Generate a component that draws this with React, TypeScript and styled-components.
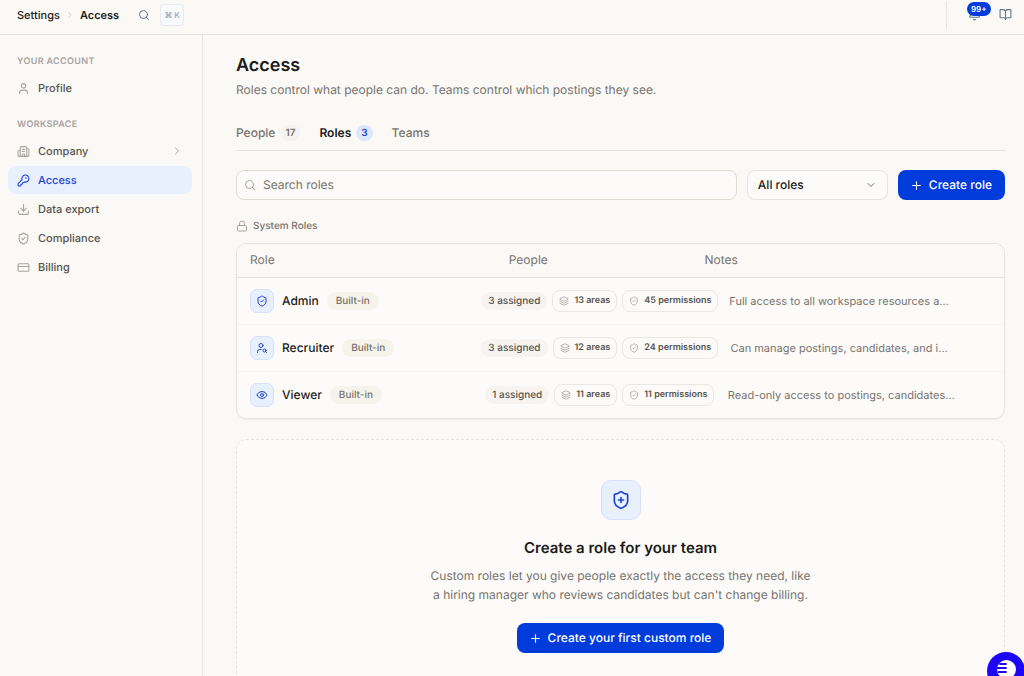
import React from "react";
import styled, { createGlobalStyle } from "styled-components";
import {
  Bell, BookOpen, Building2, ChevronDown, ChevronRight, CreditCard, Download, Eye, KeyRound,
  Layers, Lock, Plus, Search, ShieldCheck, ShieldPlus, User, UserSearch,
} from "lucide-react";

const color = {
  page: "#faf9f6",
  surface: "#fcfbf9",
  line: "#e6e4e0",
  faint: "#f6f4f1",
  ink: "#1c1b1a",
  body: "#57534e",
  muted: "#78736e",
  soft: "#a8a29e",
  blue: "#003bdb",
  accent: "#1d43cf",
  tint: "#e8effd",
};

const GlobalStyle = createGlobalStyle`
  * { box-sizing: border-box; }
  body {
    margin: 0;
    background: ${color.page};
    color: ${color.ink};
    font-family: Inter, "Liberation Sans", sans-serif;
    font-size: 12px;
    line-height: 16px;
    text-rendering: geometricPrecision;
    overflow: hidden;
  }
  button, input, select { font: inherit; color: inherit; text-rendering: inherit; }
  a { color: inherit; text-decoration: none; }
  h1, h2, p { margin: 0; }
`;

const Shell = styled.div`
  display: flex;
  flex-direction: column;
  height: 100vh;
`;

const TopBar = styled.header`
  display: flex;
  align-items: center;
  justify-content: space-between;
  flex: none;
  height: 35px;
  padding: 0 12px 5px 17px;
  border-bottom: 1px solid ${color.line};
`;

const Crumbs = styled.nav`
  display: flex;
  align-items: center;
  gap: 5px;
  font-size: 11px;
  font-weight: 500;
  svg { color: #c9c5c1; }
`;

const Current = styled.span`
  font-weight: 600;
`;

const IconButton = styled.button`
  display: flex;
  align-items: center;
  padding: 0;
  border: 0;
  background: none;
  color: #64748b;
`;

const SearchTrigger = styled(IconButton)`
  gap: 10px;
  margin-left: 14px;
  && svg { color: #64748b; }
`;

const Shortcut = styled.kbd`
  display: flex;
  align-items: center;
  justify-content: center;
  gap: 2px;
  width: 24px;
  height: 22px;
  border: 1px solid #e6ebf2;
  border-radius: 4px;
  background: #f8fafc;
  color: #94a3b8;
  font: 500 8px/10px Inter, "DejaVu Sans", sans-serif;
`;

const Actions = styled.div`
  display: flex;
  align-items: center;
  gap: 18px;
  height: 28px;
  padding-left: 21px;
  border-left: 1px solid ${color.line};
`;

const BellButton = styled(IconButton)`
  position: relative;
`;

const Count = styled.span`
  position: absolute;
  left: -1px;
  top: -6px;
  padding: 0 4px;
  border-radius: 7px;
  background: ${color.blue};
  color: #fff;
  font-size: 8px;
  font-weight: 600;
  line-height: 14px;
`;

const Body = styled.div`
  display: flex;
  flex: 1;
  min-height: 0;
`;

const Sidebar = styled.nav`
  flex: none;
  width: 203px;
  padding: 20px 10px 0 8px;
  border-right: 1px solid ${color.line};
`;

const Group = styled.section`
  margin-bottom: 16px;
`;

const GroupTitle = styled.h2`
  padding: 0 9px;
  margin-bottom: 5px;
  color: ${color.soft};
  font-size: 9px;
  font-weight: 600;
  line-height: 14px;
  letter-spacing: 0.04em;
  text-transform: uppercase;
`;

const NavList = styled.ul`
  display: flex;
  flex-direction: column;
  gap: 1px;
  margin: 0;
  padding: 0;
  list-style: none;
`;

const NavLink = styled.a<{ $active?: boolean }>`
  display: flex;
  align-items: center;
  gap: 8px;
  height: 28px;
  padding: 0 9px;
  border-radius: 8px;
  background: ${(p) => (p.$active ? color.tint : "transparent")};
  font-size: 11px;
  font-weight: 500;
  && { color: ${(p) => (p.$active ? color.accent : color.body)}; }
  svg { color: ${(p) => (p.$active ? color.accent : color.soft)}; }
  svg:last-child:not(:first-child) { margin-left: auto; }
`;

const Main = styled.main`
  flex: 1;
  min-width: 0;
  padding: 20px 19px 0 33px;
`;

const Title = styled.h1`
  font-size: 18px;
  font-weight: 600;
  line-height: 22px;
`;

const Subtitle = styled.p`
  margin-top: 5px;
  color: ${color.muted};
`;

const Tabs = styled.div`
  display: flex;
  gap: 19px;
  height: 36px;
  margin-top: 17px;
  border-bottom: 1px solid ${color.line};
`;

const Tab = styled.button<{ $active?: boolean }>`
  display: flex;
  align-items: center;
  gap: 5px;
  padding: 0;
  border: 0;
  background: none;
  color: ${(p) => (p.$active ? color.ink : color.muted)};
  font-weight: ${(p) => (p.$active ? 600 : 500)};
`;

const TabCount = styled.span<{ $active?: boolean }>`
  padding: 0 5px;
  border-radius: 8px;
  background: ${(p) => (p.$active ? "#dfe6f7" : "#f5f3f0")};
  color: ${(p) => (p.$active ? color.accent : color.muted)};
  font-size: 10px;
  font-weight: 600;
  line-height: 16px;
`;

const Toolbar = styled.div`
  display: flex;
  gap: 10px;
  margin-top: 19px;
`;

const Field = styled.label`
  display: flex;
  align-items: center;
  gap: 7px;
  height: 30px;
  border: 1px solid ${color.line};
  border-radius: 8px;
  background: ${color.surface};
`;

const SearchField = styled(Field)`
  flex: 1;
  min-width: 0;
  padding: 0 7px;
  border-color: #dddbd4;
  color: ${color.soft};
  input {
    flex: 1;
    min-width: 0;
    padding: 0;
    border: 0;
    outline: 0;
    background: none;
    color: ${color.ink};
  }
  input::placeholder { color: ${color.muted}; opacity: 1; }
`;

const SelectField = styled(Field)`
  width: 141px;
  padding: 0 10px;
  select {
    flex: 1;
    min-width: 0;
    padding: 0;
    border: 0;
    outline: 0;
    appearance: none;
    background: none;
    font-weight: 500;
  }
  svg { color: ${color.muted}; }
`;

const PrimaryButton = styled.button`
  display: inline-flex;
  align-items: center;
  gap: 6px;
  height: 30px;
  padding: 0 13px 0 12px;
  border: 0;
  border-radius: 8px;
  background: ${color.blue};
  color: #fff;
  font-weight: 500;
  white-space: nowrap;
`;

const SectionLabel = styled.h2`
  display: flex;
  align-items: center;
  gap: 5px;
  margin: 18px 0 9px;
  color: ${color.muted};
  font-size: 10px;
  font-weight: 500;
  line-height: 16px;
  svg { color: ${color.soft}; }
`;

const TableCard = styled.div`
  overflow: hidden;
  border: 1px solid ${color.line};
  border-radius: 10px;
  background: ${color.surface};
  box-shadow: 0 1px 1px rgba(0, 0, 0, 0.04);
`;

const Table = styled.table`
  width: 100%;
  table-layout: fixed;
  border-collapse: collapse;
`;

const Col = styled.col<{ $share: number }>`
  width: ${(p) => p.$share}%;
`;

const HeadCell = styled.th<{ $indent: number }>`
  height: 33px;
  padding: 0 0 0 ${(p) => p.$indent}px;
  border-bottom: 1px solid ${color.line};
  background: ${color.page};
  color: ${color.muted};
  font-weight: 400;
  text-align: left;
`;

const Row = styled.tr`
  & + & td { border-top: 1px solid ${color.faint}; }
`;

const Cell = styled.td`
  height: 47px;
  padding: 0;
`;

const RoleCell = styled.div`
  display: flex;
  align-items: center;
  gap: 8px;
  padding-left: 13px;
  font-weight: 500;
`;

const IconTile = styled.span<{ $large?: boolean }>`
  display: flex;
  align-items: center;
  justify-content: center;
  width: ${(p) => (p.$large ? 40 : 24)}px;
  height: ${(p) => (p.$large ? 40 : 24)}px;
  border: 1px solid #d5e0fa;
  border-radius: ${(p) => (p.$large ? 10 : 7)}px;
  background: ${color.tint};
  color: ${color.accent};
`;

const Pill = styled.span<{ $tone?: "sand" }>`
  padding: 0 ${(p) => (p.$tone ? 9 : 7)}px;
  border-radius: 9px;
  background: ${(p) => (p.$tone ? "#f5f3ec" : "#f6f3f1")};
  color: ${(p) => (p.$tone ? color.muted : color.body)};
  font-size: 10px;
  font-weight: 500;
  line-height: 18px;
`;

const PeopleCell = styled.div`
  display: flex;
  align-items: center;
  justify-content: center;
  gap: 5px;
  padding-right: 3px;
  white-space: nowrap;
`;

const Tag = styled.span`
  display: flex;
  align-items: center;
  gap: 5px;
  height: 22px;
  padding: 0 6px;
  border: 1px solid #ebe8e4;
  border-radius: 8px;
  color: ${color.body};
  font-size: 9px;
  font-weight: 600;
  svg { color: ${color.soft}; }
`;

const Note = styled.div`
  color: ${color.muted};
  font-size: 11px;
  text-align: center;
  white-space: nowrap;
`;

const EmptyState = styled.section`
  display: flex;
  flex-direction: column;
  align-items: center;
  height: 260px;
  margin-top: 20px;
  padding-top: 40px;
  border: 1px dashed ${color.line};
  border-radius: 10px;
  background: ${color.surface};
`;

const EmptyTitle = styled.h2`
  margin-top: 18px;
  font-size: 15px;
  font-weight: 600;
  line-height: 20px;
`;

const EmptyText = styled.p`
  max-width: 380px;
  margin: 8px 0 19px;
  color: ${color.muted};
  line-height: 19px;
  text-align: center;
`;

const ChatButton = styled.button`
  position: fixed;
  right: -1px;
  bottom: -14px;
  width: 38px;
  height: 38px;
  padding: 0;
  border: 0;
  border-radius: 50%;
  background: #1c06f5;
  svg { display: block; }
`;

const navGroups = [
  { title: "Your account", items: [{ label: "Profile", icon: User }] },
  {
    title: "Workspace",
    items: [
      { label: "Company", icon: Building2, expandable: true },
      { label: "Access", icon: KeyRound, active: true },
      { label: "Data export", icon: Download },
      { label: "Compliance", icon: ShieldCheck },
      { label: "Billing", icon: CreditCard },
    ],
  },
] as {
  title: string;
  items: { label: string; icon: React.ElementType; active?: boolean; expandable?: boolean }[];
}[];

const tabs = [
  { label: "People", count: 17 },
  { label: "Roles", count: 3, active: true },
  { label: "Teams" },
] as { label: string; count?: number; active?: boolean }[];

const roles = [
  { name: "Admin", icon: ShieldCheck, people: 3, areas: 13, permissions: 45, note: "Full access to all workspace resources a…" },
  { name: "Recruiter", icon: UserSearch, people: 3, areas: 12, permissions: 24, note: "Can manage postings, candidates, and i…" },
  { name: "Viewer", icon: Eye, people: 1, areas: 11, permissions: 11, note: "Read-only access to postings, candidates…" },
];

export default function App() {
  return (
    <Shell>
      <GlobalStyle />
      <TopBar>
        <Crumbs aria-label="Breadcrumb">
          <a href="#settings">Settings</a>
          <ChevronRight size={10} />
          <Current aria-current="page">Access</Current>
          <SearchTrigger type="button" aria-label="Search">
            <Search size={12} />
            <Shortcut><span>⌘</span><span>K</span></Shortcut>
          </SearchTrigger>
        </Crumbs>
        <Actions>
          <BellButton type="button" aria-label="Notifications">
            <Bell size={13} />
            <Count>99+</Count>
          </BellButton>
          <IconButton type="button" aria-label="Documentation"><BookOpen size={13} /></IconButton>
        </Actions>
      </TopBar>
      <Body>
        <Sidebar aria-label="Settings">
          {navGroups.map((group) => (
            <Group key={group.title}>
              <GroupTitle>{group.title}</GroupTitle>
              <NavList>
                {group.items.map(({ label, icon: Icon, active, expandable }) => (
                  <li key={label}>
                    <NavLink href={`#${label}`} $active={active}>
                      <Icon size={13} />
                      {label}
                      {expandable && <ChevronRight size={12} />}
                    </NavLink>
                  </li>
                ))}
              </NavList>
            </Group>
          ))}
        </Sidebar>
        <Main>
          <Title>Access</Title>
          <Subtitle>Roles control what people can do. Teams control which postings they see.</Subtitle>
          <Tabs role="tablist">
            {tabs.map((tab) => (
              <Tab key={tab.label} type="button" role="tab" aria-selected={!!tab.active} $active={tab.active}>
                {tab.label}
                {tab.count && <TabCount $active={tab.active}>{tab.count}</TabCount>}
              </Tab>
            ))}
          </Tabs>
          <Toolbar>
            <SearchField>
              <Search size={12} />
              <input type="search" placeholder="Search roles" aria-label="Search roles" />
            </SearchField>
            <SelectField>
              <select aria-label="Filter roles" defaultValue="all">
                <option value="all">All roles</option>
              </select>
              <ChevronDown size={12} />
            </SelectField>
            <PrimaryButton type="button"><Plus size={13} />Create role</PrimaryButton>
          </Toolbar>
          <SectionLabel><Lock size={12} />System Roles</SectionLabel>
          <TableCard>
            <Table>
              <colgroup>
                {[31, 28, 5, 29, 7].map((share, i) => <Col key={i} $share={share} />)}
              </colgroup>
              <thead>
                <tr>
                  <HeadCell $indent={13}>Role</HeadCell>
                  <HeadCell $indent={34}>People</HeadCell>
                  <HeadCell $indent={15} colSpan={3}>Notes</HeadCell>
                </tr>
              </thead>
              <tbody>
                {roles.map(({ name, icon: Icon, people, areas, permissions, note }) => (
                  <Row key={name}>
                    <Cell>
                      <RoleCell>
                        <IconTile><Icon size={12} /></IconTile>
                        {name}
                        <Pill $tone="sand">Built-in</Pill>
                      </RoleCell>
                    </Cell>
                    <Cell colSpan={2}>
                      <PeopleCell>
                        <Pill>{people} assigned</Pill>
                        <Tag><Layers size={10} />{areas} areas</Tag>
                        <Tag><ShieldCheck size={10} />{permissions} permissions</Tag>
                      </PeopleCell>
                    </Cell>
                    <Cell><Note>{note}</Note></Cell>
                    <Cell />
                  </Row>
                ))}
              </tbody>
            </Table>
          </TableCard>
          <EmptyState>
            <IconTile $large><ShieldPlus size={20} /></IconTile>
            <EmptyTitle>Create a role for your team</EmptyTitle>
            <EmptyText>
              Custom roles let you give people exactly the access they need, like a hiring manager who
              reviews candidates but can't change billing.
            </EmptyText>
            <PrimaryButton type="button"><Plus size={13} />Create your first custom role</PrimaryButton>
          </EmptyState>
        </Main>
      </Body>
      <ChatButton type="button" aria-label="Open chat">
        <svg width="38" height="38" viewBox="0 0 38 38" fill="none">
          <circle cx="19.500" cy="17.500" r="9.500" fill="#fff" />
          <path d="M13 12h6M10.500 16h8.500M11.500 20h7.500" stroke="#1c06f5" strokeWidth="1.800" strokeLinecap="round" />
        </svg>
      </ChatButton>
    </Shell>
  );
}
